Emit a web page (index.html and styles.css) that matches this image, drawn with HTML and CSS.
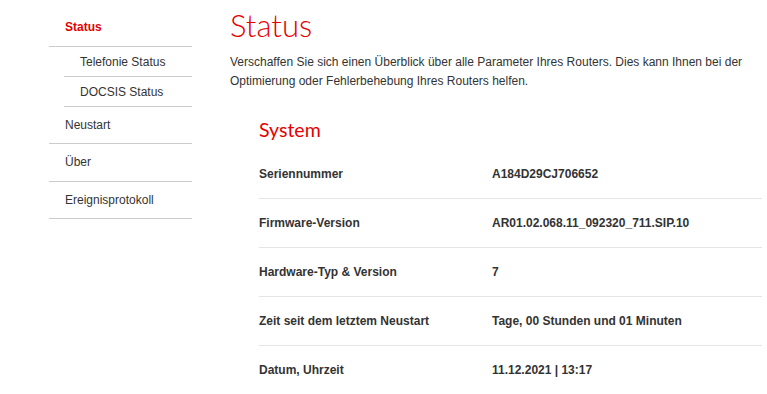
FILE: index.html
```html
<!DOCTYPE html>
<html lang="de">
<head>
    <meta charset="UTF-8">
    <meta name="viewport" content="width=device-width, initial-scale=1.0">
    <title>Status</title>
    <link rel="stylesheet" href="styles.css">
</head>
<body>
    <div class="page">
        <nav class="sidebar">
            <a class="nav-item active" href="#">Status</a>
            <a class="nav-item sub" href="#">Telefonie Status</a>
            <a class="nav-item sub" href="#">DOCSIS Status</a>
            <a class="nav-item" href="#">Neustart</a>
            <a class="nav-item tall" href="#">Über</a>
            <a class="nav-item" href="#">Ereignisprotokoll</a>
        </nav>

        <main class="content">
            <h1 class="page-title">Status</h1>
            <p class="intro">Verschaffen Sie sich einen Überblick über alle Parameter Ihres Routers. Dies kann Ihnen bei der Optimierung oder Fehlerbehebung Ihres Routers helfen.</p>

            <section class="panel">
                <h2 class="panel-title">System</h2>
                <div class="info-table">
                    <div class="info-row">
                        <div class="info-label">Seriennummer</div>
                        <div class="info-value">A184D29CJ706652</div>
                    </div>
                    <div class="info-row">
                        <div class="info-label">Firmware-Version</div>
                        <div class="info-value">AR01.02.068.11_092320_711.SIP.10</div>
                    </div>
                    <div class="info-row">
                        <div class="info-label">Hardware-Typ &amp; Version</div>
                        <div class="info-value">7</div>
                    </div>
                    <div class="info-row">
                        <div class="info-label">Zeit seit dem letztem Neustart</div>
                        <div class="info-value">Tage, 00 Stunden und 01 Minuten</div>
                    </div>
                    <div class="info-row">
                        <div class="info-label">Datum, Uhrzeit</div>
                        <div class="info-value">11.12.2021 | 13:17</div>
                    </div>
                </div>
            </section>
        </main>
    </div>
</body>
</html>
```

FILE: styles.css
```css
body {
    margin: 0;
    background: #fff;
    font-family: 'Liberation Sans', Arial, sans-serif;
    font-size: 12px;
    color: #333;
}

.page {
    display: flex;
    align-items: flex-start;
}

.sidebar {
    display: flex;
    flex-direction: column;
    width: 143px;
    margin-left: 49px;
    flex-shrink: 0;
}

.nav-item {
    display: block;
    padding: 10px 0 10px 16px;
    line-height: 16px;
    color: #333;
    text-decoration: none;
    border-bottom: 1px solid #ccc;
}

.nav-item.active {
    padding-top: 19px;
    padding-bottom: 11px;
    color: #e60000;
    font-weight: bold;
}

.nav-item.sub {
    margin-left: 15px;
    padding: 7px 0 6px 16px;
}

.nav-item.tall {
    padding-bottom: 11px;
}

.content {
    width: 532px;
    margin-left: 38px;
}

.page-title {
    margin: 6px 0 0;
    font-family: 'Lato', sans-serif;
    font-weight: 300;
    font-size: 31px;
    line-height: 38px;
    color: #e60000;
}

.intro {
    margin: 9px 0 0;
    line-height: 19px;
    color: #333;
}

.panel {
    margin-left: 29px;
}

.panel-title {
    margin: 27px 0 8px;
    font-family: 'Lato', sans-serif;
    font-weight: 400;
    font-size: 19.5px;
    line-height: 24px;
    color: #e60000;
}

.info-row {
    display: flex;
    align-items: center;
    height: 48px;
    border-bottom: 1px solid #e5e5e5;
    font-weight: bold;
}

.info-row:last-child {
    border-bottom: none;
}

.info-label {
    width: 233px;
    flex-shrink: 0;
}
```
